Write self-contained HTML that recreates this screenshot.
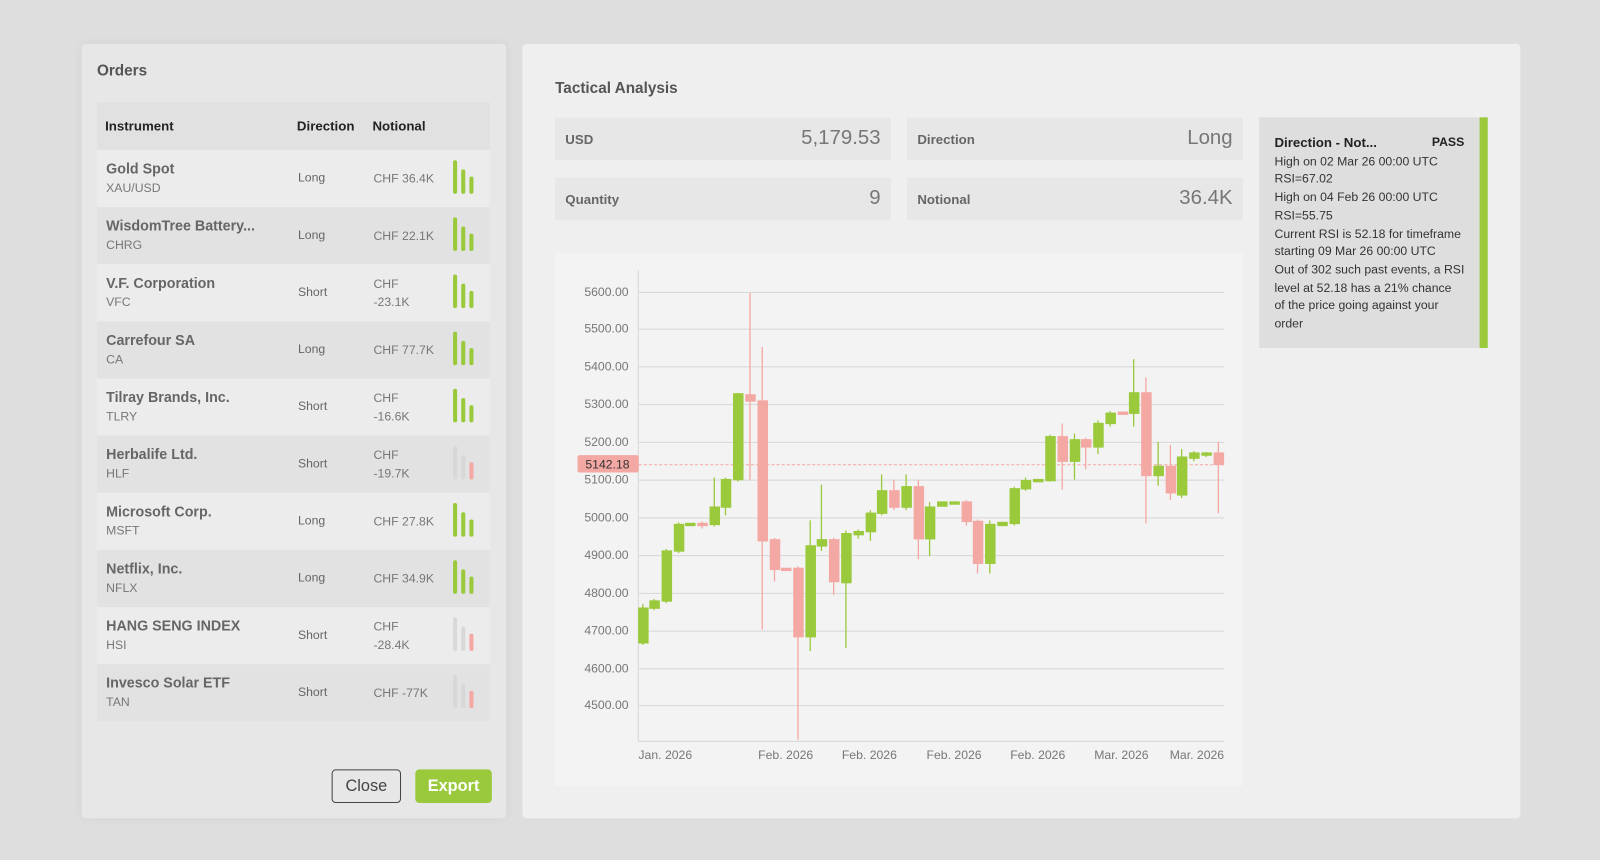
<!DOCTYPE html>
<html><head><meta charset="utf-8"><style>
*{box-sizing:border-box;margin:0;padding:0}
body{width:1600px;height:860px;background:#dedede;font-family:"Liberation Sans","DejaVu Sans",sans-serif;overflow:hidden;color:#444}
#wrap{position:absolute;left:0;top:0;width:1568px;height:843px;transform:scale(1.0204);transform-origin:0 0}
.p{position:absolute}
#orders{left:80px;top:43px;width:416px;height:759px;background:#e7e7e7;border-radius:4px;box-shadow:0 0 10px rgba(0,0,0,.05)}
#orders h2{position:absolute;left:15px;top:18px;font-size:15px;font-weight:bold;color:#555}
.row{position:absolute;left:15px;width:385px;height:56px}
.row .n{position:absolute;left:9px;top:10px;font-size:14px;font-weight:bold;color:#666}
.row .s{position:absolute;left:9px;top:30px;font-size:12px;color:#777}
.row .d{position:absolute;left:197px;top:20px;font-size:12px;color:#666}
.row .v{position:absolute;left:271px;font-size:12px;color:#777;line-height:18px;width:62px}
.bars{position:absolute;left:349px;top:9px;width:22px;height:34px}
.bars i{position:absolute;bottom:0;width:4px;border-radius:2px}
#tact{left:512px;top:43px;width:978px;height:759px;background:#efefef;border-radius:4px}
.box{position:absolute;background:#e7e7e7;height:42px}
.box .l{position:absolute;left:10px;top:14px;font-size:13px;font-weight:bold;color:#666}
.box .r{position:absolute;right:10px;top:9px;font-size:20px;color:#777}
</style></head><body><div id="wrap">
<div class="p" id="orders">
<h2>Orders</h2>
<div class="row" style="top:57px;height:47px;background:#e1e1e1">
<span class="p" style="left:8px;top:16px;font-size:13px;font-weight:bold;color:#222">Instrument</span>
<span class="p" style="left:196px;top:16px;font-size:13px;font-weight:bold;color:#222">Direction</span>
<span class="p" style="left:270px;top:16px;font-size:13px;font-weight:bold;color:#222">Notional</span></div>

<div class="row" style="top:104px;background:#ececec"><div class="n">Gold Spot</div><div class="s">XAU/USD</div><div class="d">Long</div><div class="v" style="top:19px">CHF 36.4K</div><div class="bars"><i style="left:0;height:33px;background:#9aca3c"></i><i style="left:8px;height:24px;background:#9aca3c"></i><i style="left:16px;height:17px;background:#9aca3c"></i></div></div>
<div class="row" style="top:160px;background:#e2e2e2"><div class="n">WisdomTree Battery...</div><div class="s">CHRG</div><div class="d">Long</div><div class="v" style="top:19px">CHF 22.1K</div><div class="bars"><i style="left:0;height:33px;background:#9aca3c"></i><i style="left:8px;height:24px;background:#9aca3c"></i><i style="left:16px;height:17px;background:#9aca3c"></i></div></div>
<div class="row" style="top:216px;background:#ececec"><div class="n">V.F. Corporation</div><div class="s">VFC</div><div class="d">Short</div><div class="v" style="top:10px">CHF<br>-23.1K</div><div class="bars"><i style="left:0;height:33px;background:#9aca3c"></i><i style="left:8px;height:24px;background:#9aca3c"></i><i style="left:16px;height:17px;background:#9aca3c"></i></div></div>
<div class="row" style="top:272px;background:#e2e2e2"><div class="n">Carrefour SA</div><div class="s">CA</div><div class="d">Long</div><div class="v" style="top:19px">CHF 77.7K</div><div class="bars"><i style="left:0;height:33px;background:#9aca3c"></i><i style="left:8px;height:24px;background:#9aca3c"></i><i style="left:16px;height:17px;background:#9aca3c"></i></div></div>
<div class="row" style="top:328px;background:#ececec"><div class="n">Tilray Brands, Inc.</div><div class="s">TLRY</div><div class="d">Short</div><div class="v" style="top:10px">CHF<br>-16.6K</div><div class="bars"><i style="left:0;height:33px;background:#9aca3c"></i><i style="left:8px;height:24px;background:#9aca3c"></i><i style="left:16px;height:17px;background:#9aca3c"></i></div></div>
<div class="row" style="top:384px;background:#e2e2e2"><div class="n">Herbalife Ltd.</div><div class="s">HLF</div><div class="d">Short</div><div class="v" style="top:10px">CHF<br>-19.7K</div><div class="bars"><i style="left:0;height:33px;background:#d8d8d8"></i><i style="left:8px;height:24px;background:#d8d8d8"></i><i style="left:16px;height:17px;background:#f4a8a4"></i></div></div>
<div class="row" style="top:440px;background:#ececec"><div class="n">Microsoft Corp.</div><div class="s">MSFT</div><div class="d">Long</div><div class="v" style="top:19px">CHF 27.8K</div><div class="bars"><i style="left:0;height:33px;background:#9aca3c"></i><i style="left:8px;height:24px;background:#9aca3c"></i><i style="left:16px;height:17px;background:#9aca3c"></i></div></div>
<div class="row" style="top:496px;background:#e2e2e2"><div class="n">Netflix, Inc.</div><div class="s">NFLX</div><div class="d">Long</div><div class="v" style="top:19px">CHF 34.9K</div><div class="bars"><i style="left:0;height:33px;background:#9aca3c"></i><i style="left:8px;height:24px;background:#9aca3c"></i><i style="left:16px;height:17px;background:#9aca3c"></i></div></div>
<div class="row" style="top:552px;background:#ececec"><div class="n">HANG SENG INDEX</div><div class="s">HSI</div><div class="d">Short</div><div class="v" style="top:10px">CHF<br>-28.4K</div><div class="bars"><i style="left:0;height:33px;background:#d8d8d8"></i><i style="left:8px;height:24px;background:#d8d8d8"></i><i style="left:16px;height:17px;background:#f4a8a4"></i></div></div>
<div class="row" style="top:608px;background:#e2e2e2"><div class="n">Invesco Solar ETF</div><div class="s">TAN</div><div class="d">Short</div><div class="v" style="top:19px">CHF -77K</div><div class="bars"><i style="left:0;height:33px;background:#d8d8d8"></i><i style="left:8px;height:24px;background:#d8d8d8"></i><i style="left:16px;height:17px;background:#f4a8a4"></i></div></div>

<div class="p" style="left:245px;top:711px;width:68px;height:33px;border:1px solid #444;border-radius:4px;font-size:16px;color:#444;text-align:center;line-height:31px">Close</div>
<div class="p" style="left:327px;top:711px;width:75px;height:33px;background:#9aca3c;border-radius:4px;font-size:16px;font-weight:bold;color:#fff;text-align:center;line-height:33px">Export</div>
</div>

<div class="p" id="tact">
<div class="p" style="left:32px;top:35px;font-size:15px;font-weight:bold;color:#555">Tactical Analysis</div>
<div class="box" style="left:32px;top:72px;width:329px"><span class="l">USD</span><span class="r">5,179.53</span></div>
<div class="box" style="left:377px;top:72px;width:329px"><span class="l">Direction</span><span class="r">Long</span></div>
<div class="box" style="left:32px;top:131px;width:329px"><span class="l">Quantity</span><span class="r">9</span></div>
<div class="box" style="left:377px;top:131px;width:329px"><span class="l">Notional</span><span class="r">36.4K</span></div>
<div class="p" style="left:722px;top:72px;width:224px;height:226px;background:#dedede;border-right:8px solid #9aca3c;padding:16px 15px;font-size:12px;line-height:17.7px;color:#333;white-space:nowrap">
<div style="font-weight:bold;color:#222;font-size:13px;display:flex;justify-content:space-between;margin-bottom:1px"><span>Direction - Not...</span><span style="font-size:12px">PASS</span></div>
High on 02 Mar 26 00:00 UTC<br>RSI=67.02<br>High on 04 Feb 26 00:00 UTC<br>RSI=55.75<br>Current RSI is 52.18 for timeframe<br>starting 09 Mar 26 00:00 UTC<br>Out of 302 such past events, a RSI<br>level at 52.18 has a 21% chance<br>of the price going against your<br>order</div>
</div>

<svg class="p" style="left:544px;top:248px" width="674" height="522" viewBox="544 248 674 522" font-family="Liberation Sans, sans-serif">
<rect x="544" y="248" width="674" height="522" fill="#f3f3f3"/>
<g stroke="#d6d6d6" stroke-width="1">
<line x1="626" x2="1200" y1="286.5" y2="286.5"/><line x1="626" x2="1200" y1="322.5" y2="322.5"/><line x1="626" x2="1200" y1="359.5" y2="359.5"/><line x1="626" x2="1200" y1="396.5" y2="396.5"/><line x1="626" x2="1200" y1="433.5" y2="433.5"/><line x1="626" x2="1200" y1="470.5" y2="470.5"/><line x1="626" x2="1200" y1="507.5" y2="507.5"/><line x1="626" x2="1200" y1="544.5" y2="544.5"/><line x1="626" x2="1200" y1="581.5" y2="581.5"/><line x1="626" x2="1200" y1="618.5" y2="618.5"/><line x1="626" x2="1200" y1="655.5" y2="655.5"/><line x1="626" x2="1200" y1="691.5" y2="691.5"/>
<line x1="626" x2="1200" y1="726.5" y2="726.5"/><line x1="625.5" x2="625.5" y1="265" y2="727"/>
</g>
<g font-size="12" fill="#777" text-anchor="end">
<text x="616" y="290">5600.00</text><text x="616" y="326">5500.00</text><text x="616" y="363">5400.00</text><text x="616" y="400">5300.00</text><text x="616" y="437">5200.00</text><text x="616" y="474">5100.00</text><text x="616" y="511">5000.00</text><text x="616" y="548">4900.00</text><text x="616" y="585">4800.00</text><text x="616" y="622">4700.00</text><text x="616" y="659">4600.00</text><text x="616" y="695">4500.00</text>
</g>
<g font-size="12" fill="#777" text-anchor="middle">
<text x="652" y="744">Jan. 2026</text><text x="770" y="744">Feb. 2026</text><text x="852" y="744">Feb. 2026</text><text x="935" y="744">Feb. 2026</text><text x="1017" y="744">Feb. 2026</text><text x="1099" y="744">Mar. 2026</text><text x="1173" y="744">Mar. 2026</text>
</g>
<line x1="626" x2="1200" y1="455.5" y2="455.5" stroke="#f4a8a4" stroke-dasharray="3,2"/>
<rect x="566" y="446" width="60" height="17" rx="2" fill="#f4a8a4"/>
<text x="617" y="459" font-size="12" fill="#333" text-anchor="end">5142.18</text>
<g stroke-width="1.3">
<g stroke="#9aca3c" fill="#9aca3c">
<line x1="630" x2="630" y1="592" y2="632"/><rect x="626" y="596" width="9" height="34"/>
<line x1="641" x2="641" y1="587" y2="598"/><rect x="637" y="589" width="9" height="7"/>
<line x1="653" x2="653" y1="538" y2="591"/><rect x="649" y="540" width="9" height="49"/>
<line x1="665" x2="665" y1="512" y2="542"/><rect x="661" y="514" width="9" height="26"/>
<rect x="672" y="513" width="9" height="2"/>
<line x1="700" x2="700" y1="468" y2="516"/><rect x="696" y="497" width="9" height="17"/>
<line x1="711" x2="711" y1="468" y2="505"/><rect x="707" y="470" width="9" height="27"/>
<line x1="723" x2="723" y1="385" y2="472"/><rect x="719" y="386" width="9" height="84"/>
<line x1="794" x2="794" y1="510" y2="638"/><rect x="790" y="535" width="9" height="89"/>
<line x1="805" x2="805" y1="475" y2="540"/><rect x="801" y="529" width="9" height="6"/>
<line x1="829" x2="829" y1="520" y2="635"/><rect x="825" y="523" width="9" height="48"/>
<line x1="841" x2="841" y1="519" y2="528"/><rect x="837" y="521" width="9" height="3"/>
<line x1="853" x2="853" y1="500" y2="530"/><rect x="849" y="503" width="9" height="18"/>
<line x1="864" x2="864" y1="465" y2="505"/><rect x="860" y="481" width="9" height="22"/>
<line x1="888" x2="888" y1="465" y2="500"/><rect x="884" y="477" width="9" height="20"/>
<line x1="911" x2="911" y1="492" y2="545"/><rect x="907" y="497" width="9" height="31"/>
<rect x="919" y="492" width="9" height="4"/><rect x="931" y="492" width="9" height="2"/>
<line x1="970" x2="970" y1="510" y2="562"/><rect x="966" y="514" width="9" height="38"/>
<rect x="978" y="512" width="9" height="3"/>
<line x1="994" x2="994" y1="477" y2="515"/><rect x="990" y="479" width="9" height="34"/>
<line x1="1005" x2="1005" y1="468" y2="481"/><rect x="1001" y="471" width="9" height="8"/>
<rect x="1013" y="470" width="9" height="2"/>
<line x1="1029" x2="1029" y1="426" y2="472"/><rect x="1025" y="428" width="9" height="43"/>
<line x1="1053" x2="1053" y1="425" y2="470"/><rect x="1049" y="431" width="9" height="21"/>
<line x1="1076" x2="1076" y1="412" y2="445"/><rect x="1072" y="415" width="9" height="23"/>
<line x1="1088" x2="1088" y1="403" y2="418"/><rect x="1084" y="405" width="9" height="10"/>
<line x1="1111" x2="1111" y1="352" y2="418"/><rect x="1107" y="385" width="9" height="20"/>
<line x1="1135" x2="1135" y1="433" y2="476"/><rect x="1131" y="457" width="9" height="9"/>
<line x1="1158" x2="1158" y1="440" y2="488"/><rect x="1154" y="448" width="9" height="37"/>
<line x1="1170" x2="1170" y1="442" y2="452"/><rect x="1166" y="444" width="9" height="5"/>
<line x1="1182" x2="1182" y1="443" y2="448"/><rect x="1178" y="444" width="9" height="2"/>
</g>
<g stroke="#f4a8a4" fill="#f4a8a4">
<rect x="684" y="513" width="9" height="2"/><line x1="688" x2="688" y1="511" y2="518"/>
<line x1="735" x2="735" y1="287" y2="470"/><rect x="731" y="387" width="9" height="6"/>
<line x1="747" x2="747" y1="340" y2="617"/><rect x="743" y="393" width="9" height="137"/>
<line x1="759" x2="759" y1="527" y2="570"/><rect x="755" y="529" width="9" height="29"/>
<rect x="766" y="557" width="9" height="2"/>
<line x1="782" x2="782" y1="555" y2="725"/><rect x="778" y="557" width="9" height="67"/>
<line x1="817" x2="817" y1="527" y2="583"/><rect x="813" y="529" width="9" height="41"/>
<line x1="876" x2="876" y1="470" y2="500"/><rect x="872" y="481" width="9" height="16"/>
<line x1="900" x2="900" y1="470" y2="548"/><rect x="896" y="477" width="9" height="51"/>
<line x1="947" x2="947" y1="490" y2="515"/><rect x="943" y="492" width="9" height="19"/>
<line x1="958" x2="958" y1="509" y2="562"/><rect x="954" y="511" width="9" height="41"/>
<line x1="1041" x2="1041" y1="415" y2="480"/><rect x="1037" y="428" width="9" height="24"/>
<line x1="1064" x2="1064" y1="429" y2="460"/><rect x="1060" y="431" width="9" height="7"/>
<rect x="1096" y="404" width="9" height="2"/>
<line x1="1123" x2="1123" y1="370" y2="513"/><rect x="1119" y="385" width="9" height="81"/>
<line x1="1147" x2="1147" y1="436" y2="490"/><rect x="1143" y="457" width="9" height="26"/>
<line x1="1194" x2="1194" y1="433" y2="503"/><rect x="1190" y="444" width="9" height="11"/>
</g>
</g>
</svg>
</div></body></html>
